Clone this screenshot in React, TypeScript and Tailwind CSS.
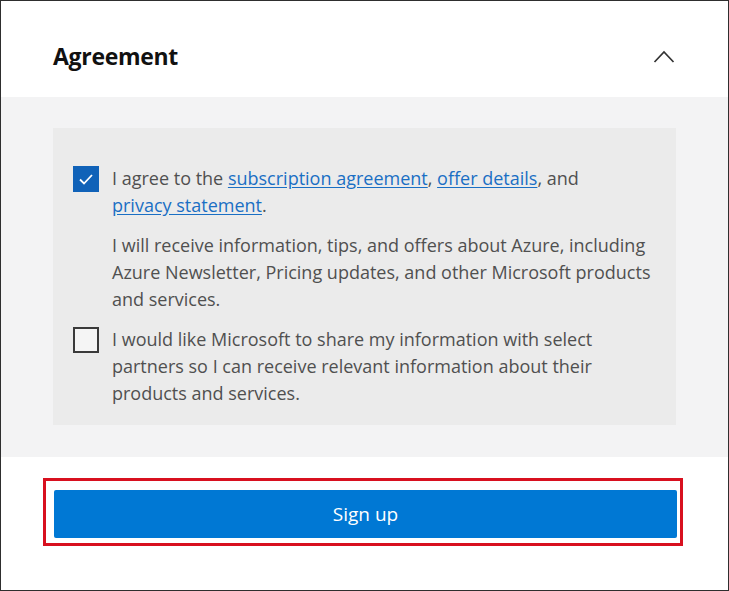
function Check({ checked }: { checked?: boolean }) {
  if (checked) {
    return (
      <span className="mt-[1px] flex h-[26px] w-[26px] shrink-0 items-center justify-center bg-[#1062b8]">
        <svg width="18" height="18" viewBox="0 0 18 18" fill="none">
          <path d="M3 9.5l4 4 8-8.5" stroke="white" strokeWidth="1.8" />
        </svg>
      </span>
    );
  }
  return <span className="mt-[1px] h-[26px] w-[26px] shrink-0 border-2 border-[#3a3a3a] bg-[#f5f5f5]" />;
}

export default function App() {
  return (
    <div
      className="h-[591px] w-[729px] overflow-hidden border border-[#2e2e2e] bg-white text-[#505050]"
      style={{ fontFamily: '"Open Sans", "Noto Sans", sans-serif' }}
    >
      <header className="flex h-[96px] items-center justify-between pl-[52px] pr-[53px] pt-[14px]">
        <h1 className="text-[23px] font-bold tracking-[-0.3px] text-[#111]">Agreement</h1>
        <svg width="22" height="13" viewBox="0 0 22 13" fill="none">
          <path d="M1.5 12L11 2l9.5 10" stroke="#333" strokeWidth="1.7" />
        </svg>
      </header>

      <section className="bg-[#f3f3f4] px-[52px] pt-[31px] pb-[32px]">
        <div className="flex flex-col gap-[13px] bg-[#ebebeb] px-[20px] pt-[37px] pb-[18px] text-[18px] leading-[27px]">
          <div className="flex gap-[13px]">
            <Check checked />
            <div className="w-[540px]">
              <p>
                I agree to the{" "}
                <a className="text-[#1a6fc4] underline underline-offset-2">subscription agreement</a>,{" "}
                <a className="text-[#1a6fc4] underline underline-offset-2">offer details</a>, and
                <br />
                <a className="text-[#1a6fc4] underline underline-offset-2">privacy statement</a>.
              </p>
              <p className="mt-[13px]">
                I will receive information, tips, and offers about Azure, including Azure Newsletter, Pricing updates,
                and other Microsoft products and services.
              </p>
            </div>
          </div>
          <div className="flex gap-[13px]">
            <Check />
            <p className="w-[535px]">
              I would like Microsoft to share my information with select partners so I can receive relevant
              information about their products and services.
            </p>
          </div>
        </div>
      </section>

      <div className="pl-[42px] pt-[21px]">
        <div className="w-[640px] border-[3px] border-[#d8101f] pt-[9px] pb-[5px] pl-[8px] pr-[3px]">
          <button className="flex h-[48px] w-full items-center justify-center rounded-[2px] bg-[#0078d4] text-[19px] text-white">
            Sign up
          </button>
        </div>
      </div>
    </div>
  );
}
